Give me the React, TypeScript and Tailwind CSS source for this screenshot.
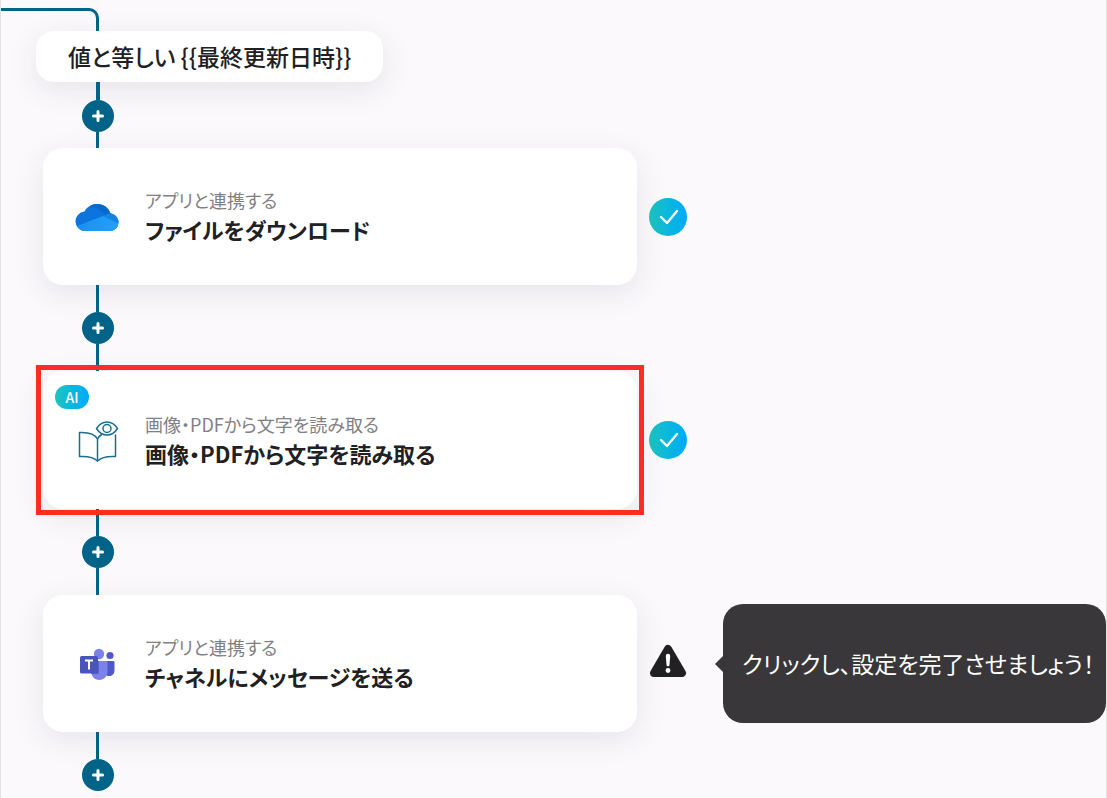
import type { ReactNode } from 'react';

interface Step {
  caption: string;
  title: string;
  icon: ReactNode;
  status: 'done' | 'warning';
  ai?: boolean;
  selected?: boolean;
}

function OneDriveIcon() {
  return (
    <svg viewBox="0 0 48 48" className="size-12" aria-hidden="true">
      <defs>
        <clipPath id="cloud">
          <path d="M13 38a9.500 9.500 0 0 1-1.500-19.500C14 13.500 19 11 24.500 11c6 0 11 3.800 13 9.500 4.700 .5 8 4.300 8 8.700a8.800 8.800 0 0 1-8.800 8.800z" />
        </clipPath>
        <linearGradient id="cloudFront" x1="0" y1="0" x2="1" y2="0">
          <stop offset="0" stopColor="#1a8ff0" />
          <stop offset="1" stopColor="#22a2fa" />
        </linearGradient>
      </defs>
      <g clipPath="url(#cloud)">
        <rect width="48" height="48" fill="#0b74df" />
        <path d="M17 14c6 0 10 3 13 6l5 4 5-4-2-12H18z" fill="#0968cc" />
        <path d="M28 25c3-4 7-5 11-4.500l9 4v12H33z" fill="#1583e2" />
        <path d="M3 33.500L30 23l18 9v8H3z" fill="url(#cloudFront)" />
      </g>
    </svg>
  );
}

function BookIcon() {
  return (
    <svg viewBox="0 0 48 48" className="size-12" fill="none" stroke="#1b6f8c" strokeWidth="1.500" strokeLinejoin="round" strokeLinecap="round" aria-hidden="true">
      <path d="M24.500 23c-2.500-4.500-9-7-18-6.500v24c8-.5 14 .5 18 4.500 4-4 9.500-5 18-4.500V19" />
      <path d="M24.500 45V23c.8-1.800 2-3.200 4-4.500" />
      <path d="M23.500 12.500C29 3.800 39 3.800 44.500 12.500 39 21.200 29 21.200 23.500 12.500z" />
      <circle cx="34" cy="12.500" r="4" />
    </svg>
  );
}

function TeamsIcon() {
  return (
    <svg viewBox="0 0 48 48" className="size-12" aria-hidden="true">
      <circle cx="37" cy="15.500" r="3.600" fill="#5059c9" />
      <path d="M31 21h9c1 0 1.500.6 1.500 1.500V30c0 4-2.500 6-5.500 6s-5-2-5-5z" fill="#5059c9" />
      <circle cx="26" cy="14" r="5.200" fill="#7b83eb" />
      <path d="M18 21h15c1 0 1.500.6 1.500 1.500V31c0 5-3.500 9-8.300 9S18 36 18 31z" fill="#7b83eb" />
      <path d="M18 21h8v11c0 1-.8 2-2 2h-5.500c-.5-1-.5-2-.5-3z" fill="#5a62c8" />
      <rect x="7" y="16" width="18" height="17.500" rx="1.500" fill="#4a54bd" />
      <path d="M12 20.500h8M16 20.500v9" stroke="#fff" strokeWidth="2" />
    </svg>
  );
}

function CheckIcon() {
  return (
    <svg viewBox="0 0 38 38" className="size-[38px]" fill="none" role="img" aria-label="完了">
      <path d="M12 19l6 6 10-12" stroke="#fff" strokeWidth="2.300" strokeLinecap="round" strokeLinejoin="round" />
    </svg>
  );
}

function WarningIcon() {
  return (
    <svg viewBox="0 0 38 40" className="h-10 w-[38px]" role="img" aria-label="警告">
      <path d="M19 5L33 29H5z" fill="#212023" stroke="#212023" strokeWidth="8" strokeLinejoin="round" />
      <path d="M16.800 12a2.200 2.200 0 0 1 4.400 0l-.7 8.800a1.500 1.500 0 0 1-3 0z" fill="#fff" />
      <circle cx="19" cy="26.500" r="2.400" fill="#fff" />
    </svg>
  );
}

function AddButton() {
  return (
    <button type="button" aria-label="追加" className="flex size-8 items-center justify-center rounded-full bg-[#006387]">
      <svg viewBox="0 0 12 12" className="size-3" stroke="#fff" strokeWidth="3" strokeLinecap="round" aria-hidden="true">
        <path d="M6 1.500v9M1.500 6h9" />
      </svg>
    </button>
  );
}

function Connector({ end = false }: { end?: boolean }) {
  return (
    <div className="ml-[81px] w-8">
      <div className="ml-[14px] h-[27px] w-[3px] bg-[#006387]" />
      <AddButton />
      {!end && <div className="ml-[14px] h-[27px] w-[3px] bg-[#006387]" />}
    </div>
  );
}

function StepRow({ caption, title, icon, status, ai, selected }: Step) {
  return (
    <div className="flex items-center pl-[42px]">
      <div className="relative max-w-[594px] flex-1">
        <button
          type="button"
          className={`flex w-full items-center gap-6 rounded-[20px] bg-white pl-[30px] text-left shadow-[0_8px_30px_rgba(60,50,70,0.10)] ${
            selected ? 'min-h-[138px]' : 'min-h-[137px]'
          }`}
        >
          {icon}
          <span className="flex flex-col pb-px">
            <span className="text-lg leading-[26px] text-[#828084]">{caption}</span>
            <span className="text-[22px] leading-8 font-bold text-[#212023]">{title}</span>
          </span>
        </button>
        {ai && (
          <span className="absolute top-[14px] left-3 flex h-6 w-[34px] items-center justify-center rounded-full bg-linear-to-r from-[#1fc4bd] to-[#04a9fb] text-sm font-medium text-white">
            AI
          </span>
        )}
        {selected && (
          <div className="pointer-events-none absolute -inset-x-[7px] -inset-y-[6px] border-[5px] border-[#fd2d24]" />
        )}
      </div>
      <div className="ml-3 flex w-[38px] shrink-0 justify-center">
        {status === 'done' ? (
          <span className="rounded-full bg-linear-to-r from-[#1fc4bd] to-[#04a9fb]">
            <CheckIcon />
          </span>
        ) : (
          <WarningIcon />
        )}
      </div>
      {status === 'warning' && (
        <div className="relative ml-9 flex h-[119px] w-[383px] shrink-0 items-center rounded-[20px] bg-[#39373a] pl-[19px] text-[23px] whitespace-nowrap text-white">
          <span className="absolute top-1/2 right-full -mt-2 border-y-8 border-r-8 border-y-transparent border-r-[#39373a]" />
          クリックし、設定を完了させましょう！
        </div>
      )}
    </div>
  );
}

const steps: Step[] = [
  { caption: 'アプリと連携する', title: 'ファイルをダウンロード', icon: <OneDriveIcon />, status: 'done' },
  {
    caption: '画像・PDFから文字を読み取る',
    title: '画像・PDFから文字を読み取る',
    icon: <BookIcon />,
    status: 'done',
    ai: true,
    selected: true,
  },
  { caption: 'アプリと連携する', title: 'チャネルにメッセージを送る', icon: <TeamsIcon />, status: 'warning' },
];

export default function App() {
  return (
    <main
      lang="ja"
      className="min-h-screen border-x border-[#e4e2e5] bg-[#fbf9fc] pt-2 font-['Noto_Sans_CJK_JP',sans-serif] [font-feature-settings:'palt']"
    >
      <div className="h-[23px] w-[98px] rounded-tr-[10px] border-t-[3px] border-r-[3px] border-[#006387]" />
      <div className="ml-[35px] flex h-[51px] w-fit items-center rounded-[18px] bg-white px-8 text-[23px] font-medium text-[#212023] shadow-[0_8px_30px_rgba(60,50,70,0.10)]">
        値と等しい {'{{最終更新日時}}'}
      </div>
      <div className="ml-[81px] w-8">
        <div className="ml-[14px] h-[18px] w-1 bg-[#006387]" />
        <AddButton />
        <div className="ml-[14px] h-4 w-[3px] bg-[#006387]" />
      </div>
      {steps.map((step, i) => (
        <div key={step.title}>
          <StepRow {...step} />
          <Connector end={i === steps.length - 1} />
        </div>
      ))}
    </main>
  );
}
